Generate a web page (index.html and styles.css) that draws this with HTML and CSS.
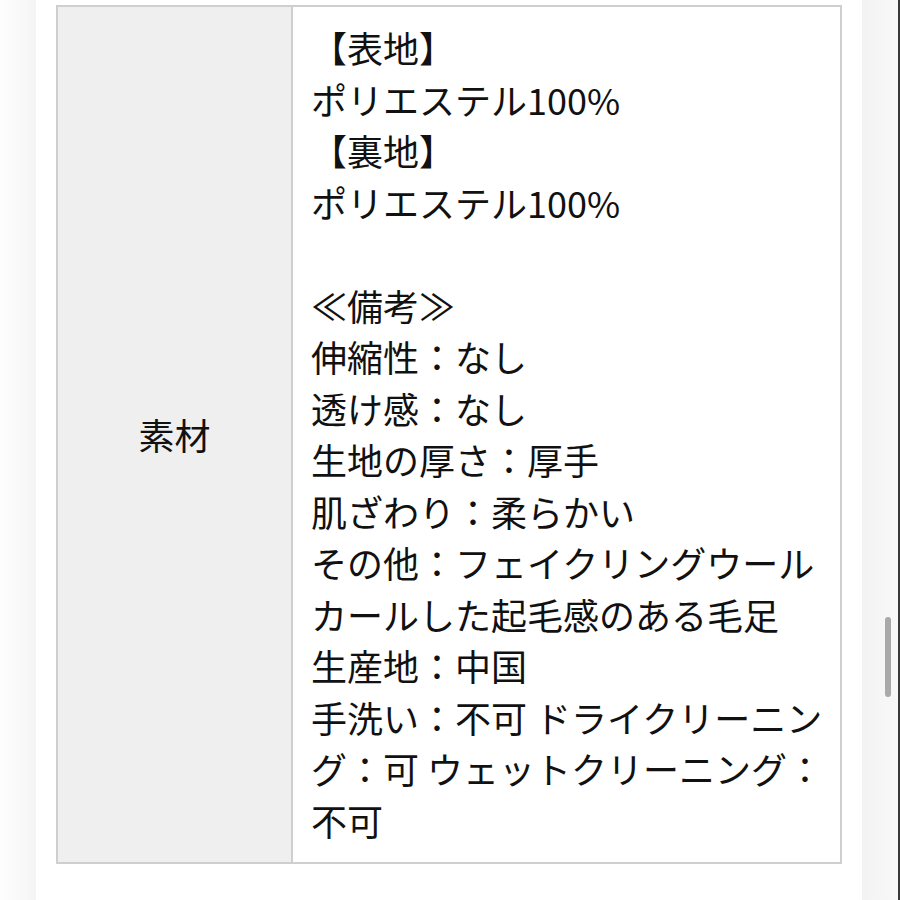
FILE: index.html
```html
<!DOCTYPE html>
<html lang="ja">
<head>
<meta charset="utf-8">
<link rel="stylesheet" href="styles.css">
</head>
<body>
<div class="screen">
  <div class="gutter-left"></div>
  <main class="page">
    <table class="spec">
      <tr>
        <th class="label">素材</th>
        <td class="value">【表地】<br>ポリエステル100%<br>【裏地】<br>ポリエステル100%<br><br>≪備考≫<br>伸縮性：なし<br>透け感：なし<br>生地の厚さ：厚手<br>肌ざわり：柔らかい<br>その他：フェイクリングウール<br>カールした起毛感のある毛足<br>生産地：中国<br>手洗い：不可 ドライクリーニン<br>グ：可 ウェットクリーニング：<br>不可</td>
      </tr>
    </table>
  </main>
  <div class="gutter-right"></div>
  <div class="scroll-thumb"></div>
</div>
</body>
</html>
```

FILE: styles.css
```css
html, body {
  margin: 0;
  padding: 0;
  background: #ffffff;
}
.screen {
  position: relative;
  display: flex;
  width: 900px;
  height: 900px;
  overflow: hidden;
  font-family: "Noto Sans CJK JP", "Noto Sans", sans-serif;
  color: #111;
}
.gutter-left {
  width: 36px;
  flex: none;
  background: linear-gradient(to right, #fdfdfd 0, #f9f9f9 20px, #f4f4f4 36px);
}
.page {
  width: 826px;
  flex: none;
  background: #fff;
  padding: 5px 0 0 20px;
  box-sizing: border-box;
}
.gutter-right {
  flex: 1;
  background: linear-gradient(to right, #f3f3f3, #f8f8f8);
  border-right: 2px solid #3a3a3a;
}
.scroll-thumb {
  position: absolute;
  left: 885px;
  top: 617px;
  width: 6px;
  height: 80px;
  border-radius: 3px;
  background: #a9a9a9;
}
.spec {
  border-collapse: collapse;
  width: 786px;
  font-size: 36px;
  line-height: 51.5px;
}
.spec th, .spec td {
  border: 2px solid #cfcfcf;
}
.label {
  width: 233px;
  background: #efefef;
  font-weight: normal;
  text-align: center;
  vertical-align: middle;
  padding: 0;
}
.value {
  background: #fff;
  text-align: left;
  vertical-align: top;
  padding: 15px 8px 16px 18px;
  white-space: nowrap;
}
```
